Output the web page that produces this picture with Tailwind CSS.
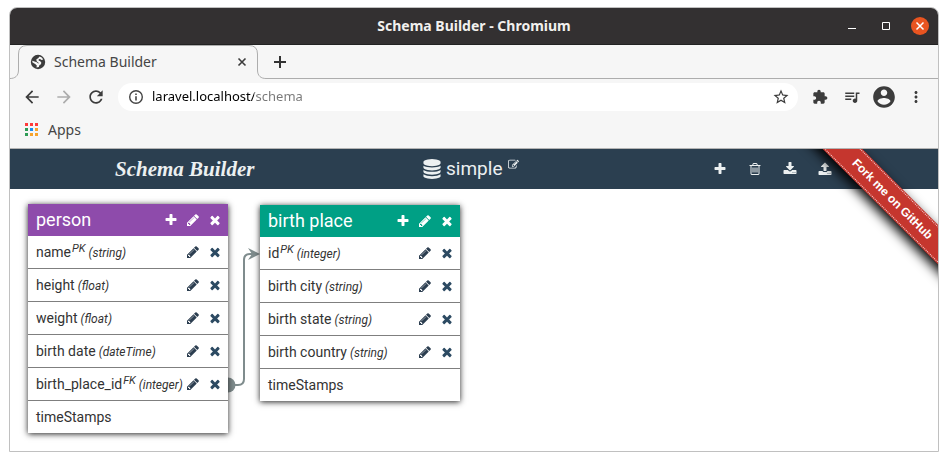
<!DOCTYPE html>
<html lang="en">
<head>
<meta charset="utf-8">
<title>Schema Builder</title>
<script src="https://cdn.jsdelivr.net/npm/@tailwindcss/browser@4"></script>
</head>
<body class="min-h-screen bg-white pt-[7px] pb-[9px] pl-[9px] pr-[9px] flex flex-col font-['Noto_Sans',sans-serif]">

<svg class="hidden" aria-hidden="true">
  <symbol id="pencil" viewBox="0 0 1792 1792"><path d="M491 1536l91-91-235-235-91 91v107h128v128h107zm523-928q0-22-22-22-10 0-17 7l-542 542q-7 7-7 17 0 22 22 22 10 0 17-7l542-542q7-7 7-17zm-54-192l416 416-832 832h-416v-416zm683 96q0 53-37 90l-166 166-416-416 166-165q36-38 90-38 53 0 91 38l235 234q37 39 37 91z"/></symbol>
  <symbol id="times" viewBox="0 0 1792 1792"><path d="M1490 1322q0 40-28 68l-136 136q-28 28-68 28t-68-28l-294-294-294 294q-28 28-68 28t-68-28l-136-136q-28-28-28-68t28-68l294-294-294-294q-28-28-28-68t28-68l136-136q28-28 68-28t68 28l294 294 294-294q28-28 68-28t68 28l136 136q28 28 28 68t-28 68l-294 294 294 294q28 28 28 68z"/></symbol>
  <symbol id="plus" viewBox="0 0 1792 1792"><path d="M1600 736v192q0 40-28 68t-68 28h-416v416q0 40-28 68t-68 28h-192q-40 0-68-28t-28-68v-416h-416q-40 0-68-28t-28-68v-192q0-40 28-68t68-28h416v-416q0-40 28-68t68-28h192q40 0 68 28t28 68v416h416q40 0 68 28t28 68z"/></symbol>
</svg>

<div class="grow flex flex-col border border-[#c0c0c0] rounded-t-lg overflow-hidden">
  <header class="h-[37px] shrink-0 bg-[#333031] border-b border-[#222] grid grid-cols-[1fr_auto_1fr] items-center">
    <h1 class="col-start-2 text-sm font-bold text-[#f2f0ee]">Schema Builder - Chromium</h1>
    <div class="flex justify-end items-center gap-4 pr-[9px]">
      <button aria-label="Minimize" class="size-[18px]"><svg class="size-[18px]" viewBox="0 0 18 18"><path d="M5 11.500h8" stroke="#fff"/></svg></button>
      <button aria-label="Maximize" class="size-[18px]"><svg class="size-[18px]" viewBox="0 0 18 18"><path d="M5.500 5.500h7v7h-7z" fill="none" stroke="#fff"/></svg></button>
      <button aria-label="Close" class="size-[18px] rounded-full bg-[#e95420]"><svg class="size-[18px]" viewBox="0 0 18 18"><path d="M5.500 5.500l7 7m0-7l-7 7" stroke="#fff" stroke-width="1.500"/></svg></button>
    </div>
  </header>

  <div class="h-[34px] shrink-0 bg-[#f6f6f6] flex text-[#454545]">
    <div class="relative w-64 shrink-0">
      <svg class="absolute inset-0 w-64 h-[34px]" viewBox="0 0 256 34" fill="none" stroke="#adadad"><path d="M0 33.500C5 33.500 8.500 31 8.500 25V9Q8.500 .5 17 .5H239Q247.500 .5 247.500 9V25C247.500 31 251 33.500 256 33.500"/></svg>
      <div class="relative h-full flex items-center pl-5 pr-4 gap-2">
        <svg class="size-4" viewBox="0 0 16 16"><circle cx="8" cy="8" r="7.200" fill="#3c3c3c"/><path fill="#f6f6f6" d="M9.500 2.500C11 2.800 12.600 4 13.200 5.500L11.500 6 10 5 8.800 5.200 8.600 6.600 10.200 7.200 11.300 8.600 11 10.200 9.500 11 8.800 13 6.500 13.600 6.800 11.500 5.500 10.200 2.300 8.200 2.400 6.800 4.500 7.600 6.800 8.300 8.200 9.600 8.800 8.900 6.600 7.300 6.400 5.200 8.200 4.200z"/></svg>
        <span class="grow text-sm">Schema Builder</span>
        <button aria-label="Close tab" class="size-4"><svg class="size-4" viewBox="0 0 16 16"><path d="M4.500 4.500l7 7m0-7l-7 7" stroke="#3c3c3c" stroke-width="1.600"/></svg></button>
      </div>
    </div>
    <div class="grow border-b border-[#adadad] flex items-center pl-1.5">
      <button aria-label="New tab" class="size-4"><svg class="size-4" viewBox="0 0 16 16"><path d="M8 2v12M2 8h12" stroke="#333" stroke-width="2"/></svg></button>
    </div>
  </div>

  <div class="shrink-0 bg-[#f6f6f6] pt-1 flex items-center pl-3 pr-1.5 text-[#3c3c3c]">
    <div class="flex gap-3 pr-3">
      <button aria-label="Back"><svg class="size-5" viewBox="0 0 24 24" fill="currentColor"><path d="M20 11H7.830l5.590-5.590L12 4l-8 8 8 8 1.410-1.410L7.830 13H20v-2z"/></svg></button>
      <button aria-label="Forward" class="text-[#adadad]"><svg class="size-5" viewBox="0 0 24 24" fill="currentColor"><path d="M12 4l-1.410 1.410L16.170 11H4v2h12.170l-5.580 5.590L12 20l8-8z"/></svg></button>
      <button aria-label="Reload"><svg class="size-5" viewBox="0 0 24 24" fill="currentColor"><path d="M17.650 6.350C16.200 4.900 14.210 4 12 4c-4.420 0-7.990 3.580-7.990 8s3.570 8 7.990 8c3.730 0 6.840-2.550 7.730-6h-2.080c-.82 2.330-3.040 4-5.650 4-3.310 0-6-2.690-6-6s2.690-6 6-6c1.660 0 3.140.69 4.220 1.780L13 11h7V4l-2.350 2.350z"/></svg></button>
    </div>
    <div class="grow h-7 rounded-full bg-white flex items-center gap-2 pl-2.5 pr-2">
      <svg class="size-4 shrink-0" viewBox="0 0 16 16" fill="none" stroke="#444" stroke-width="1.400"><circle cx="8" cy="8" r="6.300"/><path d="M8 7.200v4.200M8 4.500v1.500" stroke-width="1.600"/></svg>
      <input aria-label="Address" value="laravel.localhost/schema" class="grow min-w-0 text-[13px] outline-none bg-[linear-gradient(90deg,#000_102px,#777_102px)] bg-clip-text text-transparent">
      <button aria-label="Bookmark this page"><svg class="size-[18px]" viewBox="0 0 24 24" fill="currentColor"><path d="M22 9.240l-7.190-.62L12 2 9.190 8.630 2 9.240l5.460 4.730L5.820 21 12 17.270 18.180 21l-1.630-7.030L22 9.240zM12 15.400l-3.760 2.270 1-4.280-3.320-2.880 4.380-.38L12 6.100l1.710 4.040 4.380.38-3.320 2.880 1 4.280L12 15.400z"/></svg></button>
    </div>
    <div class="flex items-center pl-1.5">
      <button aria-label="Extensions" class="w-8 flex justify-center"><svg class="size-4" viewBox="0 0 24 24" fill="currentColor"><path d="M20.500 11H19V7c0-1.100-.9-2-2-2h-4V3.500C13 2.120 11.880 1 10.500 1S8 2.120 8 3.500V5H4c-1.100 0-1.990.9-1.990 2v3.800H3.500c1.490 0 2.700 1.210 2.700 2.700s-1.210 2.700-2.700 2.700H2V20c0 1.100.9 2 2 2h3.800v-1.500c0-1.490 1.210-2.700 2.700-2.700 1.490 0 2.700 1.210 2.700 2.700V22H17c1.100 0 2-.9 2-2v-4h1.500c1.380 0 2.500-1.120 2.500-2.500S21.880 11 20.500 11z"/></svg></button>
      <button aria-label="Media" class="w-8 flex justify-center"><svg class="size-[18px]" viewBox="0 0 24 24" fill="currentColor"><path d="M15 6H3v2h12V6zm0 4H3v2h12v-2zM3 16h8v-2H3v2zM17 6v8.180c-.31-.11-.65-.18-1-.18-1.660 0-3 1.340-3 3s1.340 3 3 3 3-1.340 3-3V8h3V6h-5z"/></svg></button>
      <button aria-label="Profile" class="w-8 flex justify-center"><svg class="size-[26px]" viewBox="0 0 24 24" fill="currentColor"><path d="M12 2C6.480 2 2 6.480 2 12s4.480 10 10 10 10-4.480 10-10S17.520 2 12 2zm0 3c1.660 0 3 1.340 3 3s-1.340 3-3 3-3-1.340-3-3 1.340-3 3-3zm0 14.200c-2.500 0-4.710-1.280-6-3.220.03-1.990 4-3.080 6-3.080 1.990 0 5.970 1.090 6 3.080-1.290 1.940-3.500 3.220-6 3.220z"/></svg></button>
      <button aria-label="Menu" class="w-8 flex justify-center"><svg class="size-[18px]" viewBox="0 0 24 24" fill="currentColor"><path d="M12 8c1.100 0 2-.9 2-2s-.9-2-2-2-2 .9-2 2 .9 2 2 2zm0 2c-1.100 0-2 .9-2 2s.9 2 2 2 2-.9 2-2-.9-2-2-2zm0 6c-1.100 0-2 .9-2 2s.9 2 2 2 2-.9 2-2-.9-2-2-2z"/></svg></button>
    </div>
  </div>

  <div class="h-[38px] shrink-0 bg-[#f6f6f6] border-b border-[#b4b4b4] flex items-center pl-[15px]">
    <a href="#" class="flex items-center gap-2.5 text-sm text-[#454545]">
      <svg class="size-[13px]" viewBox="0 0 13 13"><path fill="#ff3a3a" d="M0 0h3v3H0zM5 0h3v3H5zM10 0h3v3h-3z"/><path fill="#2e9b55" d="M0 5h3v3H0zM0 10h3v3H0z"/><path fill="#1a8df0" d="M5 5h3v3H5z"/><path fill="#f7a32b" d="M10 5h3v3h-3zM5 10h3v3H5zM10 10h3v3h-3z"/></svg>
      Apps
    </a>
  </div>

  <div class="relative grow overflow-hidden flex flex-col bg-white font-[Roboto,sans-serif]">
    <nav class="h-10 shrink-0 bg-[#2b3f50] text-[#ecf0f1] grid grid-cols-[307fr_280fr_236fr] items-center pl-[105px]">
      <a href="#" class="font-['Liberation_Serif',serif] font-bold italic text-[21px] leading-none whitespace-nowrap">Schema Builder</a>
      <div class="flex items-center gap-1 text-[19px]">
        <svg class="size-5" viewBox="0 0 1792 1792" fill="currentColor"><path d="M896 768q237 0 443-43t325-127v170q0 69-103 128t-280 93.500-385 34.500-385-34.500-280-93.500-103-128v-170q119 84 325 127t443 43zm0 768q237 0 443-43t325-127v170q0 69-103 128t-280 93.500-385 34.500-385-34.500-280-93.500-103-128v-170q119 84 325 127t443 43zm0-384q237 0 443-43t325-127v170q0 69-103 128t-280 93.500-385 34.500-385-34.500-280-93.500-103-128v-170q119 84 325 127t443 43zm0-1152q208 0 385 34.500t280 93.500 103 128v128q0 69-103 128t-280 93.500-385 34.500-385-34.500-280-93.500-103-128v-128q0-69 103-128t280-93.500 385-34.500z"/></svg>
        <span>simple</span>
        <button aria-label="Rename schema" class="self-start pt-1 pl-0.5"><svg class="size-[11px]" viewBox="0 0 1792 1792" fill="currentColor"><path d="M888 1184l116-116-152-152-116 116v56h96v96h56zm440-720q-16-16-33 1l-350 350q-17 17-1 33t33-1l350-350q17-17 1-33zm80 594v190q0 119-84.500 203.500t-203.500 84.500h-832q-119 0-203.500-84.500t-84.500-203.500v-832q0-119 84.500-203.500t203.500-84.500h832q63 0 117 25 15 7 18 23 3 17-9 29l-49 49q-14 14-32 8-23-6-45-6h-832q-66 0-113 47t-47 113v832q0 66 47 113t113 47h832q66 0 113-47t47-113v-126q0-13 9-22l64-64q15-15 35-7t20 29zm-96-738l288 288-672 672h-288v-288zm444 132l-92 92-288-288 92-92q28-28 68-28t68 28l152 152q28 28 28 68t-28 68z"/></svg></button>
      </div>
      <div class="flex">
        <button aria-label="Add table" class="w-[35px] flex justify-center"><svg class="size-[14px]" fill="currentColor"><use href="#plus"/></svg></button>
        <button aria-label="Clear schema" class="w-[35px] flex justify-center"><svg class="size-[14px]" viewBox="0 0 1792 1792" fill="currentColor"><path d="M704 736v576q0 14-9 23t-23 9h-64q-14 0-23-9t-9-23v-576q0-14 9-23t23-9h64q14 0 23 9t9 23zm256 0v576q0 14-9 23t-23 9h-64q-14 0-23-9t-9-23v-576q0-14 9-23t23-9h64q14 0 23 9t9 23zm256 0v576q0 14-9 23t-23 9h-64q-14 0-23-9t-9-23v-576q0-14 9-23t23-9h64q14 0 23 9t9 23zm128 724v-948h-896v948q0 22 7 40.500t14.500 27 10.500 8.500h832q3 0 10.500-8.500t14.500-27 7-40.500zm-672-1076h448l-48-117q-7-9-17-11h-317q-10 2-17 11zm928 32v64q0 14-9 23t-23 9h-96v948q0 83-47 143.500t-113 60.500h-832q-66 0-113-58.500t-47-141.500v-952h-96q-14 0-23-9t-9-23v-64q0-14 9-23t23-9h309l70-167q15-37 54-63t79-26h320q40 0 79 26t54 63l70 167h309q14 0 23 9t9 23z"/></svg></button>
        <button aria-label="Download" class="w-[35px] flex justify-center"><svg class="size-[14px]" viewBox="0 0 1792 1792" fill="currentColor"><path d="M1344 1344q0-26-19-45t-45-19-45 19-19 45 19 45 45 19 45-19 19-45zm256 0q0-26-19-45t-45-19-45 19-19 45 19 45 45 19 45-19 19-45zm128-224v320q0 40-28 68t-68 28h-1472q-40 0-68-28t-28-68v-320q0-40 28-68t68-28h465l135 136q58 56 136 56t136-56l136-136h464q40 0 68 28t28 68zm-325-569q17 41-14 70l-448 448q-18 19-45 19t-45-19l-448-448q-31-29-14-70 17-39 59-39h256v-448q0-26 19-45t45-19h256q26 0 45 19t19 45v448h256q42 0 59 39z"/></svg></button>
        <button aria-label="Upload" class="w-[35px] flex justify-center"><svg class="size-[14px]" viewBox="0 0 1792 1792" fill="currentColor"><path d="M1344 1472q0-26-19-45t-45-19-45 19-19 45 19 45 45 19 45-19 19-45zm256 0q0-26-19-45t-45-19-45 19-19 45 19 45 45 19 45-19 19-45zm128-224v320q0 40-28 68t-68 28h-1472q-40 0-68-28t-28-68v-320q0-40 28-68t68-28h427q21 56 70.500 92t110.500 36h256q61 0 110.500-36t70.500-92h427q40 0 68 28t28 68zm-325-648q-17 40-59 40h-256v448q0 26-19 45t-45 19h-256q-26 0-45-19t-19-45v-448h-256q-42 0-59-40-17-39 14-69l448-448q18-19 45-19t45 19l448 448q31 30 14 69z"/></svg></button>
      </div>
    </nav>

    <main class="relative grow text-sm text-[#333]">
      <svg class="absolute left-[218px] top-[50px] w-8 h-[160px]" viewBox="0 0 32 160" aria-hidden="true">
        <path d="M0 138.500a7.500 7.500 0 0 1 0 15z" fill="#7f8c8d"/>
        <path d="M7 146H10Q16 146 16 140V21Q16 15 22 15H25" fill="none" stroke="#7f8c8d" stroke-width="2"/>
        <path d="M32 15L20 9l4 6-4 6z" fill="#7f8c8d"/>
      </svg>

      <section class="absolute left-[18px] top-[15px] w-[200px] bg-white shadow-[0_1px_6px_#222]">
        <header class="h-8 bg-[#8e4bab] text-white flex items-center gap-2 pl-2 pr-1.5">
          <h2 class="grow text-lg">person</h2>
          <button aria-label="Add column"><svg class="size-[14px]" fill="currentColor"><use href="#plus"/></svg></button>
          <button aria-label="Edit table"><svg class="size-[14px]" fill="currentColor"><use href="#pencil"/></svg></button>
          <button aria-label="Delete table"><svg class="size-[14px]" fill="currentColor"><use href="#times"/></svg></button>
        </header>
        <ul data-columns="person" class="divide-y divide-[#7f7f7f]"></ul>
      </section>

      <section class="absolute left-[250px] top-[16px] w-[200px] bg-white shadow-[0_1px_6px_#222]">
        <header class="h-8 bg-[#00a085] text-white flex items-center gap-2 pl-2 pr-1.5">
          <h2 class="grow text-lg">birth place</h2>
          <button aria-label="Add column"><svg class="size-[14px]" fill="currentColor"><use href="#plus"/></svg></button>
          <button aria-label="Edit table"><svg class="size-[14px]" fill="currentColor"><use href="#pencil"/></svg></button>
          <button aria-label="Delete table"><svg class="size-[14px]" fill="currentColor"><use href="#times"/></svg></button>
        </header>
        <ul data-columns="birth place" class="divide-y divide-[#7f7f7f]"></ul>
      </section>
    </main>

    <div class="absolute right-0 top-0 size-[150px] overflow-hidden pointer-events-none">
      <a href="#" class="absolute left-[-8px] top-[36px] w-[225px] h-7 rotate-45 bg-[#c5362e] shadow-[0_5px_12px_#000] py-px pointer-events-auto font-['Liberation_Sans',sans-serif]">
        <span class="flex h-full items-center justify-center border-y border-dotted border-white/80 text-xs font-bold text-white">Fork me on GitHub</span>
      </a>
    </div>
  </div>
</div>

<template id="column-row">
  <li class="h-[33px] last:h-8 flex items-center gap-2 pl-2 pr-1.5 whitespace-nowrap">
    <div class="grow w-0"><span data-name></span><sup data-key class="text-[11px] italic pl-px"></sup><i data-type class="text-xs pl-[3px]"></i></div>
    <button aria-label="Edit column" class="shrink-0 text-[#2c3e50]"><svg class="size-[14px]" fill="currentColor"><use href="#pencil"/></svg></button>
    <button aria-label="Delete column" class="shrink-0 text-[#2c4a62]"><svg class="size-[14px]" fill="currentColor"><use href="#times"/></svg></button>
  </li>
</template>
<script>
const tables = {
  'person': [['name', 'PK', 'string'], ['height', '', 'float'], ['weight', '', 'float'], ['birth date', '', 'dateTime'], ['birth_place_id', 'FK', 'integer'], ['timeStamps']],
  'birth place': [['id', 'PK', 'integer'], ['birth city', '', 'string'], ['birth state', '', 'string'], ['birth country', '', 'string'], ['timeStamps']]
};
const template = document.getElementById('column-row');
for (const list of document.querySelectorAll('[data-columns]')) {
  for (const [name, key, type] of tables[list.dataset.columns]) {
    const row = template.content.cloneNode(true);
    row.querySelector('[data-name]').textContent = name;
    if (key) row.querySelector('[data-key]').textContent = key;
    else row.querySelector('[data-key]').remove();
    if (type) row.querySelector('[data-type]').textContent = `(${type})`;
    else {
      row.querySelector('[data-type]').remove();
      row.querySelectorAll('button').forEach(button => button.remove());
    }
    list.append(row);
  }
}
</script>
</body>
</html>
